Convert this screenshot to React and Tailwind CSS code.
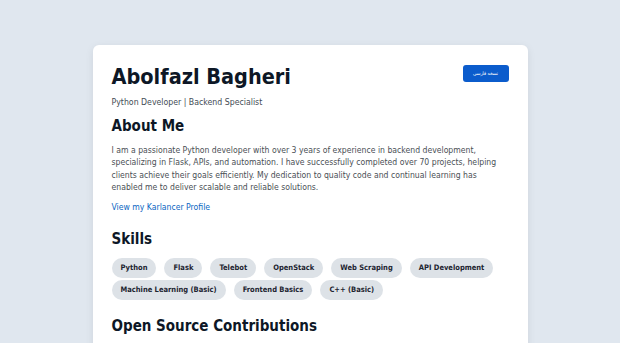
import React from "react";

const skills = [
  "Python",
  "Flask",
  "Telebot",
  "OpenStack",
  "Web Scraping",
  "API Development",
  "Machine Learning (Basic)",
  "Frontend Basics",
  "C++ (Basic)",
];

function App() {
  return (
    <div
      className="min-h-screen bg-[#e0e7ef] pt-[45px]"
      style={{ fontFamily: '"DejaVu Sans Condensed", "DejaVu Sans", Verdana, sans-serif' }}
    >
      <div className="mx-auto w-[435px] rounded-[6px] bg-white px-[19px] pt-[17px] pb-10 shadow-[0_2px_8px_rgba(0,0,0,0.08)]">
        {/* Header */}
        <div className="flex items-start justify-between">
          <h1 className="text-[21.5px] font-bold leading-[30px] text-[#0d1726]">
            Abolfazl Bagheri
          </h1>
          <button className="mt-[3px] h-[17px] w-[46px] rounded-[3px] bg-[#0b5ccc] text-[5px] text-white">
            نسخه فارسی
          </button>
        </div>
        <p className="mt-[4px] text-[8.7px] text-[#444c55]">
          Python Developer | Backend Specialist
        </p>

        {/* About */}
        <h2 className="mt-[6px] text-[15px] font-bold leading-[22px] text-[#0d1726]">
          About Me
        </h2>
        <p className="mt-[7px] text-[8.6px] leading-[12.4px] text-[#4a4f55]">
          I am a passionate Python developer with over 3 years of experience in
          backend development, specializing in Flask, APIs, and automation. I
          have successfully completed over 70 projects, helping clients achieve
          their goals efficiently. My dedication to quality code and continual
          learning has enabled me to deliver scalable and reliable solutions.
        </p>
        <a
          href="#"
          className="mt-[7px] block text-[8.6px] font-medium text-[#0a66c2]"
        >
          View my Karlancer Profile
        </a>

        {/* Skills */}
        <h2 className="mt-[14px] text-[15px] font-bold leading-[22px] text-[#0d1726]">
          Skills
        </h2>
        <div className="mt-[8px] flex flex-wrap gap-x-[8px] gap-y-[2px]">
          {skills.map((s) => (
            <span
              key={s}
              className="flex h-[20px] items-center rounded-full bg-[#dde2e7] px-[9px] text-[7.5px] font-semibold text-[#1c2430]"
            >
              {s}
            </span>
          ))}
        </div>

        {/* Open source */}
        <h2 className="mt-[15px] text-[15px] font-bold leading-[22px] text-[#0d1726]">
          Open Source Contributions
        </h2>
      </div>
    </div>
  );
}

export default App;
